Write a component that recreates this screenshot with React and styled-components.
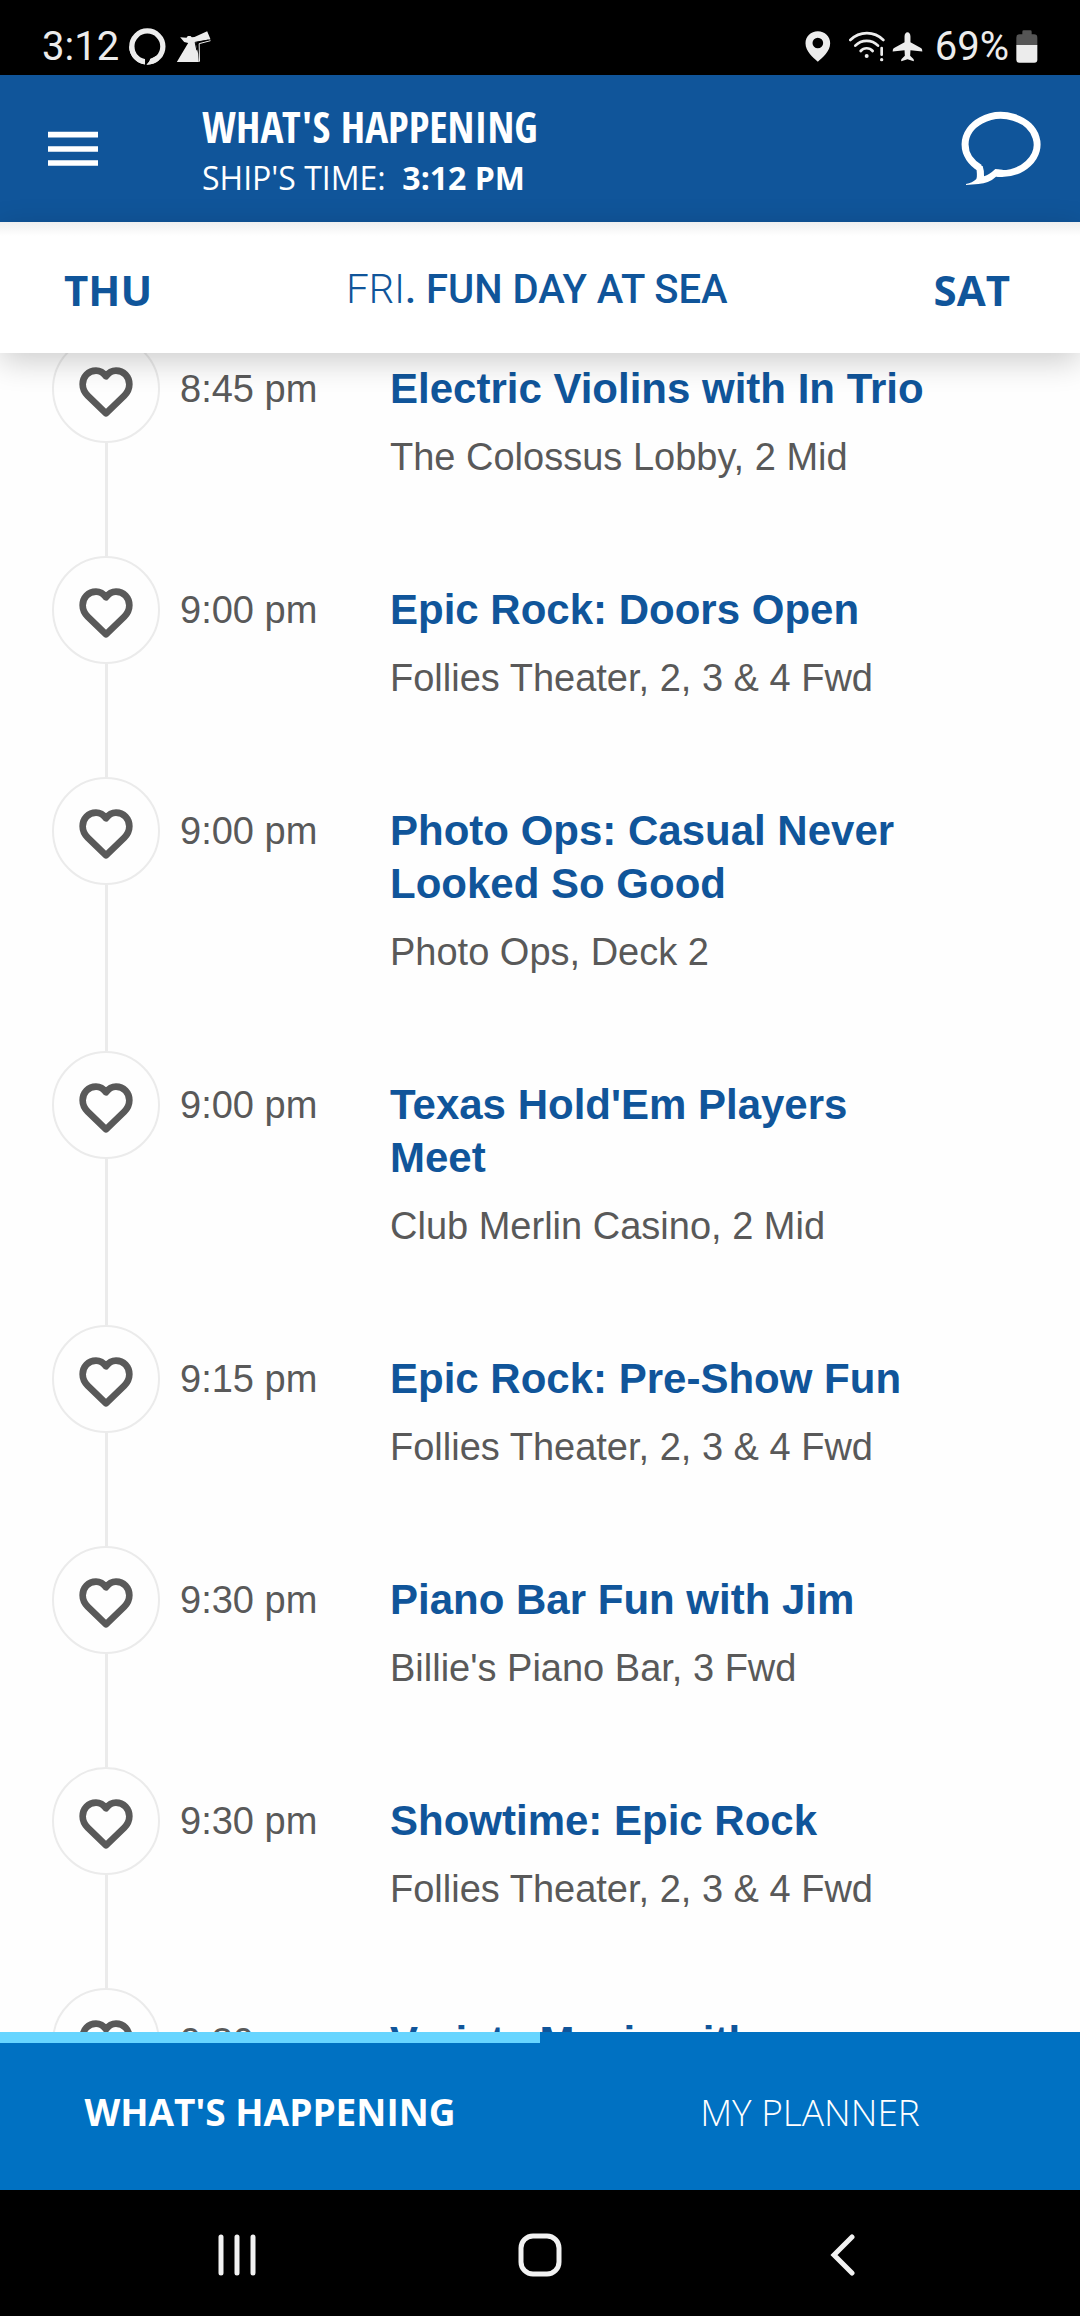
import React from 'react';
import styled, { createGlobalStyle } from 'styled-components';

const GlobalStyle = createGlobalStyle`
    * {
        box-sizing: border-box;
    }

    body {
        margin: 0;
        background: #fff;
        font-family: 'Liberation Sans', Arial, sans-serif;
    }

    button {
        margin: 0;
        padding: 0;
        border: 0;
        background: none;
        font: inherit;
        color: inherit;
        cursor: pointer;
    }

    svg {
        display: block;
    }
`;

const Screen = styled.div`
    display: flex;
    flex-direction: column;
    height: 100vh;
    overflow: hidden;
`;

const StatusBar = styled.div`
    display: flex;
    flex: none;
    align-items: center;
    justify-content: space-between;
    height: 75px;
    padding: 18px 42px 0 42px;
    background: #000;
    color: #ececec;
    font-family: Roboto, sans-serif;
    font-size: 40px;
    line-height: 48px;
`;

const StatusGroup = styled.div`
    display: flex;
    align-items: center;
    gap: ${(props) => props.$gap}px;
`;

const AppBar = styled.header`
    display: flex;
    flex: none;
    align-items: center;
    height: 147px;
    padding: 0 39px 0 48px;
    background: #10559a;
    color: #fff;
`;

const Heading = styled.div`
    flex: 1;
    margin-left: 104px;
    padding-top: 6px;
`;

const AppTitle = styled.h1`
    margin: 0;
    font-family: 'Open Sans Condensed', 'Liberation Sans Narrow', sans-serif;
    font-size: 43px;
    font-weight: 700;
    line-height: 52px;
`;

const ShipTime = styled.p`
    margin: 0;
    font-family: 'Open Sans', sans-serif;
    font-size: 32px;
    line-height: 50px;
    white-space: pre;
`;

const DayBar = styled.nav`
    position: relative;
    z-index: 1;
    display: grid;
    flex: none;
    grid-template-columns: 1fr auto 1fr;
    align-items: center;
    height: 131px;
    padding: 4px 70px 0 64px;
    background: linear-gradient(#efefef, #fff 14px);
    box-shadow: 0 8px 30px rgba(0, 0, 0, 0.2);
    color: #10559a;
    line-height: 56px;
`;

const DayButton = styled.button`
    justify-self: ${(props) => props.$side};
    font-family: 'Open Sans', sans-serif;
    font-size: 42px;
    font-weight: 700;
`;

const CurrentDay = styled.h2`
    margin: 0;
    font-family: Roboto, sans-serif;
    font-size: 40px;
    font-weight: 500;

    span {
        font-weight: 300;
    }
`;

const Events = styled.main`
    flex: 1;
    min-height: 0;
    overflow: hidden;
    background: #fefefe;
`;

/* the list is scrolled a little, so the first circle goes under the day bar */
const EventList = styled.ul`
    margin: -18px 0 0;
    padding: 0 52px;
    list-style: none;
`;

const EventRow = styled.li`
    display: grid;
    grid-template-columns: 108px 190px minmax(0, 550px);
    column-gap: 20px;
`;

const Rail = styled.div`
    display: flex;
    flex-direction: column;
    align-items: center;

    &::after {
        content: '';
        flex: 1;
        width: 3px;
        background: #ebebeb;
    }
`;

const LikeButton = styled.button`
    display: flex;
    align-items: center;
    justify-content: center;
    width: 108px;
    height: 108px;
    padding-top: 5px;
    border: 2px solid #ebebeb;
    border-radius: 50%;
    background: #fefefe;
`;

const EventTime = styled.time`
    padding-top: 28px;
    color: #595959;
    font-size: 38px;
    line-height: 53px;
`;

const EventBody = styled.div`
    padding: 27px 0 75px;
`;

const EventTitle = styled.h3`
    margin: 0 0 18px;
    color: #10559a;
    font-size: 42px;
    font-weight: 700;
    line-height: 53px;
`;

const EventPlace = styled.p`
    margin: 0;
    color: #595959;
    font-size: 38px;
    line-height: 48px;
    white-space: nowrap;
`;

const TabBar = styled.div`
    display: flex;
    flex: none;
    height: 158px;
    background: #0071c2;
`;

const Tab = styled.button`
    flex: 1;
    border-top: 11px solid ${(props) => (props.$active ? '#67d5ff' : 'transparent')};
    padding-bottom: 11px;
    color: #fff;
    font-family: 'Open Sans', sans-serif;
    font-size: 37px;
    font-weight: ${(props) => (props.$active ? 700 : 300)};
`;

const NavBar = styled.nav`
    display: grid;
    flex: none;
    grid-template-columns: repeat(3, 1fr);
    height: 126px;
    padding: 4px 86px 0;
    background: #000;
`;

const NavButton = styled.button`
    display: flex;
    align-items: center;
    justify-content: center;
`;

const RingIcon = () => (
    <svg width="37" height="37" viewBox="387 83 111 112">
        <circle cx="442" cy="139" r="47" fill="none" stroke="#ececec" strokeWidth="16" />
        <path d="M435 176L450 174L450 182L440 195H435Z" fill="#000" />
        <path d="M387 139A55 55 0 0 0 435 193V180A40 40 0 0 1 402 139Z" fill="#ececec" />
        <path d="M439 194Q449 185 451 177L468 168L478 180Q463 194 439 194Z" fill="#ececec" />
    </svg>
);

const FunnelIcon = () => (
    <svg width="35" height="32" viewBox="531 92 104 96">
        <path
            d="M543 111L562 112L566 107L574 107L578 111L586 110L624 93L634 117L592 125L590 131L597 160L599 185H533L567 128L555 125Z"
            fill="#ececec"
        />
        <path d="M634 121L600 130L601 184" fill="none" stroke="#ececec" strokeWidth="3" />
        <path d="M628 119L588 126L593 150" fill="none" stroke="#000" strokeWidth="3" />
    </svg>
);

const PinIcon = () => (
    <svg width="26" height="31" viewBox="257 92 77 93">
        <path
            fill="#ececec"
            fillRule="evenodd"
            d="M295 93C316 93 332 109 332 129C332 153 309 172 295 184C281 172 258 153 258 129C258 109 274 93 295 93ZM295 112A16 16 0 1 0 295 144A16 16 0 1 0 295 112Z"
        />
    </svg>
);

const WifiIcon = () => (
    <svg width="36" height="31" viewBox="387 92 108 93">
        <g fill="none" stroke="#ececec" strokeWidth="8" strokeLinecap="round">
            <path d="M391 119A70 70 0 0 1 490 119" />
            <path d="M406 136A47 47 0 0 1 474 136" />
            <path d="M422 152A24 24 0 0 1 458 152" />
            <path d="M485 143V163" />
        </g>
        <circle cx="440" cy="167" r="6" fill="#ececec" />
        <circle cx="485" cy="178" r="5" fill="#ececec" />
    </svg>
);

const PlaneIcon = () => (
    <svg width="31" height="30" viewBox="517 94 92 91">
        <path
            fill="#ececec"
            d="M563 95C568 95 572 100 572 108V125L605 143Q608 145 608 153L572 149L571 166L581 176Q583 178 582 183L563 177L544 183Q543 178 545 176L555 166L554 149L518 153Q518 145 521 143L554 125V108C554 100 558 95 563 95Z"
        />
    </svg>
);

const BatteryIcon = () => (
    <svg width="22" height="33" viewBox="890 90 66 99">
        <path d="M909 95Q909 91 913 91H933Q937 91 937 95V103H944Q954 103 954 113V136H891V113Q891 103 901 103H909Z" fill="#555" />
        <path d="M891 135H954V179Q954 188 945 188H900Q891 188 891 179Z" fill="#ececec" />
    </svg>
);

const MenuIcon = () => (
    <svg width="50" height="36" viewBox="144 390 150 108">
        <path d="M144 401H294M144 444H294M144 486H294" stroke="#fff" strokeWidth="17" />
    </svg>
);

const ChatIcon = () => (
    <svg width="81" height="75" viewBox="720 333 243 225">
        <path d="M832 520A108 87 0 1 0 780 504" fill="none" stroke="#fff" strokeWidth="21" />
        <path
            d="M768 496Q773 530 769 537Q757 549 738 552V555Q756 554 775 552Q808 549 828 530H848V509L826 507Q808 524 792 529Q793 512 788 498Z"
            fill="#fff"
        />
    </svg>
);

const HeartIcon = () => (
    <svg width="54" height="50" viewBox="237 772 162 150">
        <path
            d="M318 800Q306 783 288 783C265 783 248 801 248 824C248 838 254 849 263 858L318 911L373 858C382 849 388 838 388 824C388 801 371 783 348 783Q330 783 318 800Z"
            fill="none"
            stroke="#595959"
            strokeWidth="20"
            strokeLinejoin="round"
        />
    </svg>
);

const RecentsIcon = () => (
    <svg width="38" height="42" viewBox="0 0 38 42">
        <path d="M3 3V39M19 3V39M35 3V39" stroke="#f2f2f2" strokeWidth="5" strokeLinecap="round" />
    </svg>
);

const HomeIcon = () => (
    <svg width="44" height="44" viewBox="0 0 44 44">
        <rect x="3" y="3" width="38" height="38" rx="12" fill="none" stroke="#f2f2f2" strokeWidth="5" />
    </svg>
);

const BackIcon = () => (
    <svg width="26" height="42" viewBox="0 0 26 42">
        <path d="M22 3L4 21L22 39" fill="none" stroke="#f2f2f2" strokeWidth="5" strokeLinecap="round" />
    </svg>
);

const events = [
    { time: '8:45 pm', title: 'Electric Violins with In Trio', place: 'The Colossus Lobby, 2 Mid' },
    { time: '9:00 pm', title: 'Epic Rock: Doors Open', place: 'Follies Theater, 2, 3 & 4 Fwd' },
    { time: '9:00 pm', title: 'Photo Ops: Casual Never Looked So Good', place: 'Photo Ops, Deck 2' },
    { time: '9:00 pm', title: "Texas Hold'Em Players Meet", place: 'Club Merlin Casino, 2 Mid' },
    { time: '9:15 pm', title: 'Epic Rock: Pre-Show Fun', place: 'Follies Theater, 2, 3 & 4 Fwd' },
    { time: '9:30 pm', title: 'Piano Bar Fun with Jim', place: "Billie's Piano Bar, 3 Fwd" },
    { time: '9:30 pm', title: 'Showtime: Epic Rock', place: 'Follies Theater, 2, 3 & 4 Fwd' },
    { time: '9:30 pm', title: 'Variety Music with', place: '' },
];

const Event = ({ time, title, place }) => (
    <EventRow>
        <Rail>
            <LikeButton aria-label={`Like ${title}`}>
                <HeartIcon />
            </LikeButton>
        </Rail>
        <EventTime>{time}</EventTime>
        <EventBody>
            <EventTitle>{title}</EventTitle>
            <EventPlace>{place}</EventPlace>
        </EventBody>
    </EventRow>
);

const App = () => {
    return (
        <Screen>
            <GlobalStyle />
            <StatusBar>
                <StatusGroup $gap={10}>
                    <span>3:12</span>
                    <RingIcon />
                    <FunnelIcon />
                </StatusGroup>
                <StatusGroup $gap={7}>
                    <StatusGroup $gap={18}>
                        <PinIcon />
                        <WifiIcon />
                    </StatusGroup>
                    <StatusGroup $gap={12}>
                        <PlaneIcon />
                        <span>69%</span>
                    </StatusGroup>
                    <BatteryIcon />
                </StatusGroup>
            </StatusBar>
            <AppBar>
                <button aria-label="Menu">
                    <MenuIcon />
                </button>
                <Heading>
                    <AppTitle>WHAT'S HAPPENING</AppTitle>
                    <ShipTime>
                        SHIP'S TIME:{'  '}
                        <b>3:12 PM</b>
                    </ShipTime>
                </Heading>
                <button aria-label="Chat">
                    <ChatIcon />
                </button>
            </AppBar>
            <DayBar>
                <DayButton $side="start">THU</DayButton>
                <CurrentDay>
                    <span>FRI</span>. FUN DAY AT SEA
                </CurrentDay>
                <DayButton $side="end">SAT</DayButton>
            </DayBar>
            <Events>
                <EventList>
                    {events.map((event) => (
                        <Event key={event.time + event.title} {...event} />
                    ))}
                </EventList>
            </Events>
            <TabBar>
                <Tab $active>WHAT'S HAPPENING</Tab>
                <Tab>MY PLANNER</Tab>
            </TabBar>
            <NavBar>
                <NavButton aria-label="Recent apps">
                    <RecentsIcon />
                </NavButton>
                <NavButton aria-label="Home">
                    <HomeIcon />
                </NavButton>
                <NavButton aria-label="Back">
                    <BackIcon />
                </NavButton>
            </NavBar>
        </Screen>
    );
};

export default App;
